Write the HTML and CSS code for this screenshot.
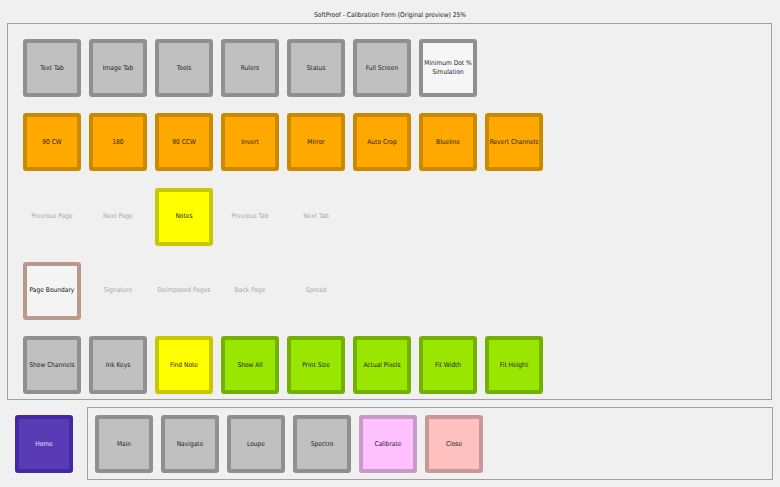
FILE: index.html
```html
<!DOCTYPE html>
<html>
<head>
<meta charset="utf-8">
<link rel="stylesheet" href="styles.css">
</head>
<body>
<div class="title">SoftProof - Calibration Form (Original preview) 25%</div>
<div class="panel main-panel">
  <div class="grid">
    <div class="btn gray">Text Tab</div>
    <div class="btn gray">Image Tab</div>
    <div class="btn gray">Tools</div>
    <div class="btn gray">Rulers</div>
    <div class="btn gray">Status</div>
    <div class="btn gray">Full Screen</div>
    <div class="btn white">Minimum Dot %<br>Simulation</div>
    <div class="slot"></div>

    <div class="btn orange">90 CW</div>
    <div class="btn orange">180</div>
    <div class="btn orange">90 CCW</div>
    <div class="btn orange">Invert</div>
    <div class="btn orange">Mirror</div>
    <div class="btn orange">Auto Crop</div>
    <div class="btn orange">Blueline</div>
    <div class="btn orange">Revert Channels</div>

    <div class="btn off">Previous Page</div>
    <div class="btn off">Next Page</div>
    <div class="btn yellow">Notes</div>
    <div class="btn off">Previous Tab</div>
    <div class="btn off">Next Tab</div>
    <div class="slot"></div>
    <div class="slot"></div>
    <div class="slot"></div>

    <div class="btn tan">Page Boundary</div>
    <div class="btn off">Signature</div>
    <div class="btn off">Deimposed Pages</div>
    <div class="btn off">Back Page</div>
    <div class="btn off">Spread</div>
    <div class="slot"></div>
    <div class="slot"></div>
    <div class="slot"></div>

    <div class="btn gray">Show Channels</div>
    <div class="btn gray">Ink Keys</div>
    <div class="btn yellow">Find Note</div>
    <div class="btn green">Show All</div>
    <div class="btn green">Print Size</div>
    <div class="btn green">Actual Pixels</div>
    <div class="btn green">Fit Width</div>
    <div class="btn green">Fit Height</div>
  </div>
</div>
<div class="bottom">
  <div class="btn purple">Home</div>
  <div class="panel nav-panel">
    <div class="btn gray">Main</div>
    <div class="btn gray">Navigate</div>
    <div class="btn gray">Loupe</div>
    <div class="btn gray">Spectro</div>
    <div class="btn pink">Calibrate</div>
    <div class="btn rose">Close</div>
  </div>
</div>
</body>
</html>
```
FILE: styles.css
```css
html, body {
  margin: 0;
  padding: 0;
  background: #f0f0f0;
  font-family: "DejaVu Sans Condensed", "DejaVu Sans", sans-serif;
  color: #1e1e1e;
}
body {
  width: 780px;
  height: 487px;
  overflow: hidden;
}
.title {
  height: 23px;
  line-height: 30px;
  text-align: center;
  font-size: 6.6px;
  color: #222;
}
.panel {
  border: 1px solid #a0a0a0;
  box-sizing: border-box;
  background: #f0f0f0;
}
.main-panel {
  margin-left: 7px;
  width: 765px;
  height: 377px;
  padding: 15px 0 0 15px;
}
.grid {
  display: grid;
  grid-template-columns: repeat(8, 58px);
  grid-auto-rows: 58px;
  column-gap: 8px;
  row-gap: 16.3px;
}
.btn {
  box-sizing: border-box;
  width: 58px;
  height: 58px;
  border: 4px solid #909090;
  border-radius: 3px;
  display: flex;
  align-items: center;
  justify-content: center;
  text-align: center;
  font-size: 6.6px;
  line-height: 9px;
  white-space: nowrap;
}
.gray { background: #c0c0c0; border-color: #909090; }
.white { background: #f6f6f6; border-color: #909090; }
.orange { background: #ffa800; border-color: #c98a00; }
.yellow { background: #ffff00; border-color: #c8c800; }
.green { background: #99e600; border-color: #74b000; }
.tan { background: #f4f4f4; border-color: #b89a8c; color: #111; }
.off { border-color: transparent; background: transparent; color: #a8a8a8; }
.purple { background: #5a3bb6; border-color: #4628a0; color: #e6e0ff; }
.pink { background: #ffc0ff; border-color: #c89ac8; }
.rose { background: #ffc0c0; border-color: #c89898; }
.bottom {
  display: flex;
  align-items: flex-start;
  margin-top: 7px;
}
.bottom > .purple {
  margin: 8px 0 0 15px;
}
.nav-panel {
  margin-left: 14px;
  width: 686px;
  height: 73px;
  display: flex;
  gap: 8px;
  padding: 7px 0 0 7px;
}
```
